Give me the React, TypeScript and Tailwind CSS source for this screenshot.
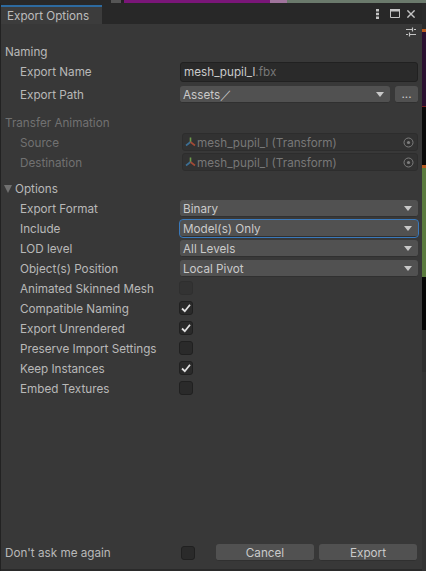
import React from 'react';

function Caret() {
    return (
        <svg width="8" height="5" viewBox="0 0 8 5" className="shrink-0">
            <path d="M0 0h8L4 5z" fill="#c8c8c8" />
        </svg>
    );
}

function Dropdown({ value, focused }: { value: string; focused?: boolean }) {
    return (
        <div className={`flex-1 h-[17px] mb-[1px] flex items-center justify-between pl-[3px] pr-[6px] rounded-[3px] bg-[#515151] text-[#cacaca] border-b border-[#303030] ${focused ? 'outline outline-1 outline-[#3a79bb]' : ''}`}>
            <span className="mt-[1px]">{value}</span>
            <Caret />
        </div>
    );
}

function Check({ checked, disabled }: { checked?: boolean; disabled?: boolean }) {
    return (
        <div className={`w-[14px] h-[14px] rounded-[3px] border flex items-center justify-center ${disabled ? 'bg-[#333333] border-[#2f2f2f]' : 'bg-[#2a2a2a] border-[#202020]'}`}>
            {checked && (
                <svg width="10" height="10" viewBox="0 0 10 10">
                    <path d="M1 5.5 3.8 8.2 9 1.8" fill="none" stroke="#e0e0e0" strokeWidth="1.8" />
                </svg>
            )}
        </div>
    );
}

function TransformIcon() {
    return (
        <svg width="11" height="10" viewBox="0 0 11 10" className="shrink-0 mr-[1px]">
            <path d="M5.5 .5v4.5" stroke="#6d9a4a" strokeWidth="1.6" />
            <path d="M5.5 5 1 8.5" stroke="#3d6f94" strokeWidth="1.6" />
            <path d="M5.5 5 10 8.5" stroke="#a34a35" strokeWidth="1.6" />
        </svg>
    );
}

function ObjectField() {
    return (
        <div className="ml-[2px] w-[236px] h-[18px] mb-[2px] flex items-center justify-between pl-[2px] pr-[3px] rounded-[3px] bg-[#323232] border border-[#2d2d2d] text-[#787878]">
            <div className="flex items-center">
                <TransformIcon />
                <span className="mt-[1px]">mesh_pupil_l (Transform)</span>
            </div>
            <svg width="11" height="11" viewBox="0 0 11 11" className="shrink-0">
                <circle cx="5.5" cy="5.5" r="4.5" fill="none" stroke="#7d7d7d" />
                <circle cx="5.5" cy="5.5" r="1.6" fill="#7d7d7d" />
            </svg>
        </div>
    );
}

function Row({ label, dim, children, className }: { label: string; dim?: boolean; children: React.ReactNode; className?: string }) {
    return (
        <div className={`flex items-center pl-[19px] pr-[4px] shrink-0 ${className ?? 'h-[20px]'}`}>
            <span className={`w-[160px] shrink-0 ${dim ? 'text-[#717171]' : 'text-[#b8b8b8]'}`}>{label}</span>
            {children}
        </div>
    );
}

function Option({ label, checked, disabled }: { label: string; checked?: boolean; disabled?: boolean }) {
    return (
        <Row label={label}>
            <div className="mb-[2px] -ml-[1px]">
                <Check checked={checked} disabled={disabled} />
            </div>
        </Row>
    );
}

export default function App() {
    return (
        <div className="w-[426px] h-[571px] flex flex-col bg-[#2a2a2a] overflow-hidden text-[11.7px] leading-[16px] font-['Inter',sans-serif]">
            {/* Scene view peeking above the window */}
            <div className="h-[3px] flex shrink-0">
                <div className="w-[111px] bg-[#282828]" />
                <div className="w-[10px] bg-[#555555]" />
                <div className="w-[3px] bg-[#222222]" />
                <div className="w-[146px] bg-[#7a1678]" />
                <div className="w-[17px] bg-[#a0749c]" />
                <div className="flex-1 bg-[#6b7a6c]" />
            </div>

            <div className="flex flex-1 min-h-0">
                <div className="w-[1px] bg-[#222222]" />
                <div className="w-[421px] mb-[2px] flex flex-col bg-[#383838]">
                    {/* Title bar */}
                    <div className="h-[21px] bg-[#282828] flex shrink-0 justify-between">
                        <div className="w-[101px] mt-[2px] bg-[#3c3c3c] border-t-2 border-[#2d6a9f] pl-[6px] flex items-center text-[#bcbcbc]">
                            Export Options
                        </div>
                        <div className="flex items-center gap-[7px] pr-[7px]">
                            <svg width="3" height="10" viewBox="0 0 3 10">
                                <path d="M0 0h3v2.4H0zM0 3.8h3v2.4H0zM0 7.6h3V10H0z" fill="#c4c4c4" />
                            </svg>
                            <svg width="10" height="9" viewBox="0 0 10 9" className="ml-[4px]">
                                <path d="M.5 .5h9v8h-9z" fill="none" stroke="#c4c4c4" />
                                <path d="M0 0h10v2.5H0z" fill="#c4c4c4" />
                            </svg>
                            <svg width="8" height="8" viewBox="0 0 8 8">
                                <path d="M.4 .4l7.2 7.2M7.6 .4L.4 7.6" stroke="#c4c4c4" strokeWidth="1.4" />
                            </svg>
                        </div>
                    </div>

                    {/* Presets icon */}
                    <div className="h-[20px] flex justify-end items-start pt-[3px] pr-[6px] shrink-0">
                        <svg width="10" height="10" viewBox="0 0 10 10">
                            <path d="M0 2.5h6M8 2.5h2M0 7.5h2M4 7.5h6M6.5 0.5v4M3.5 5.5v4" stroke="#c4c4c4" strokeWidth="1.2" fill="none" />
                        </svg>
                    </div>

                    <div className="h-[16px] pl-[4px] text-[#b8b8b8] shrink-0">Naming</div>

                    <Row label="Export Name" className="h-[24px]">
                        <div className="flex-1 h-[20px] flex items-center pl-[3px] rounded-[3px] bg-[#2a2a2a] border border-[#212121] text-[#cacaca]">
                            mesh_pupil_l<span className="text-[#787878]">.fbx</span>
                        </div>
                    </Row>
                    <Row label="Export Path" className="h-[22px]">
                        <div className="flex-1 flex gap-[5px] items-start">
                            <Dropdown value="Assets／" />
                            <div className="w-[23px] h-[17px] rounded-[3px] bg-[#515151] border-b border-[#303030] text-[#cacaca] flex items-center justify-center">...</div>
                        </div>
                    </Row>

                    <div className="h-[9px] shrink-0" />
                    <div className="h-[16px] pl-[4px] text-[#717171] flex items-center shrink-0">Transfer Animation</div>
                    <div className="h-[2px] shrink-0" />
                    <Row label="Source" dim><ObjectField /></Row>
                    <Row label="Destination" dim><ObjectField /></Row>

                    <div className="h-[6px] shrink-0" />
                    <div className="h-[20px] pl-[3px] flex items-center gap-[3px] text-[#b8b8b8] shrink-0">
                        <svg width="8" height="8" viewBox="0 0 8 8"><path d="M0 0h8L4 8z" fill="#707070" /></svg>
                        Options
                    </div>

                    <Row label="Export Format"><Dropdown value="Binary" /></Row>
                    <Row label="Include"><Dropdown value="Model(s) Only" focused /></Row>
                    <Row label="LOD level"><Dropdown value="All Levels" /></Row>
                    <Row label="Object(s) Position"><Dropdown value="Local Pivot" /></Row>

                    <Option label="Animated Skinned Mesh" disabled />
                    <Option label="Compatible Naming" checked />
                    <Option label="Export Unrendered" checked />
                    <Option label="Preserve Import Settings" />
                    <Option label="Keep Instances" checked />
                    <Option label="Embed Textures" />

                    {/* Footer */}
                    <div className="mt-auto h-[17px] mb-[8px] flex items-center pl-[4px] pr-[5px]">
                        <span className="w-[176px] shrink-0 text-[#b8b8b8]">Don't ask me again</span>
                        <Check />
                        <div className="flex-1 flex gap-[5px] pl-[21px]">
                            <div className="flex-1 h-[17px] pt-[1px] rounded-[3px] bg-[#515151] border-b border-[#303030] text-[#cacaca] flex items-center justify-center">Cancel</div>
                            <div className="flex-1 h-[17px] pt-[1px] rounded-[3px] bg-[#515151] border-b border-[#303030] text-[#cacaca] flex items-center justify-center">Export</div>
                        </div>
                    </div>
                </div>

                {/* Scene view peeking beside the window */}
                <div className="flex-1 flex flex-col">
                    <div className="h-[26px] bg-[#2a2a2a]" />
                    <div className="h-[3px] bg-[#b5591f]" />
                    <div className="h-[74px] bg-[#2a1030]" />
                    <div className="h-[1px] bg-[#7a1f1f]" />
                    <div className="h-[58px] bg-[#0a0a0a]" />
                    <div className="h-[3px] bg-[#b5591f]" />
                    <div className="h-[109px] bg-[#5a7a3d]" />
                    <div className="h-[53px] bg-[#060606]" />
                    <div className="h-[42px] bg-[#2e2e2e]" />
                    <div className="flex-1 bg-[#333333]" />
                </div>
            </div>
        </div>
    );
}
